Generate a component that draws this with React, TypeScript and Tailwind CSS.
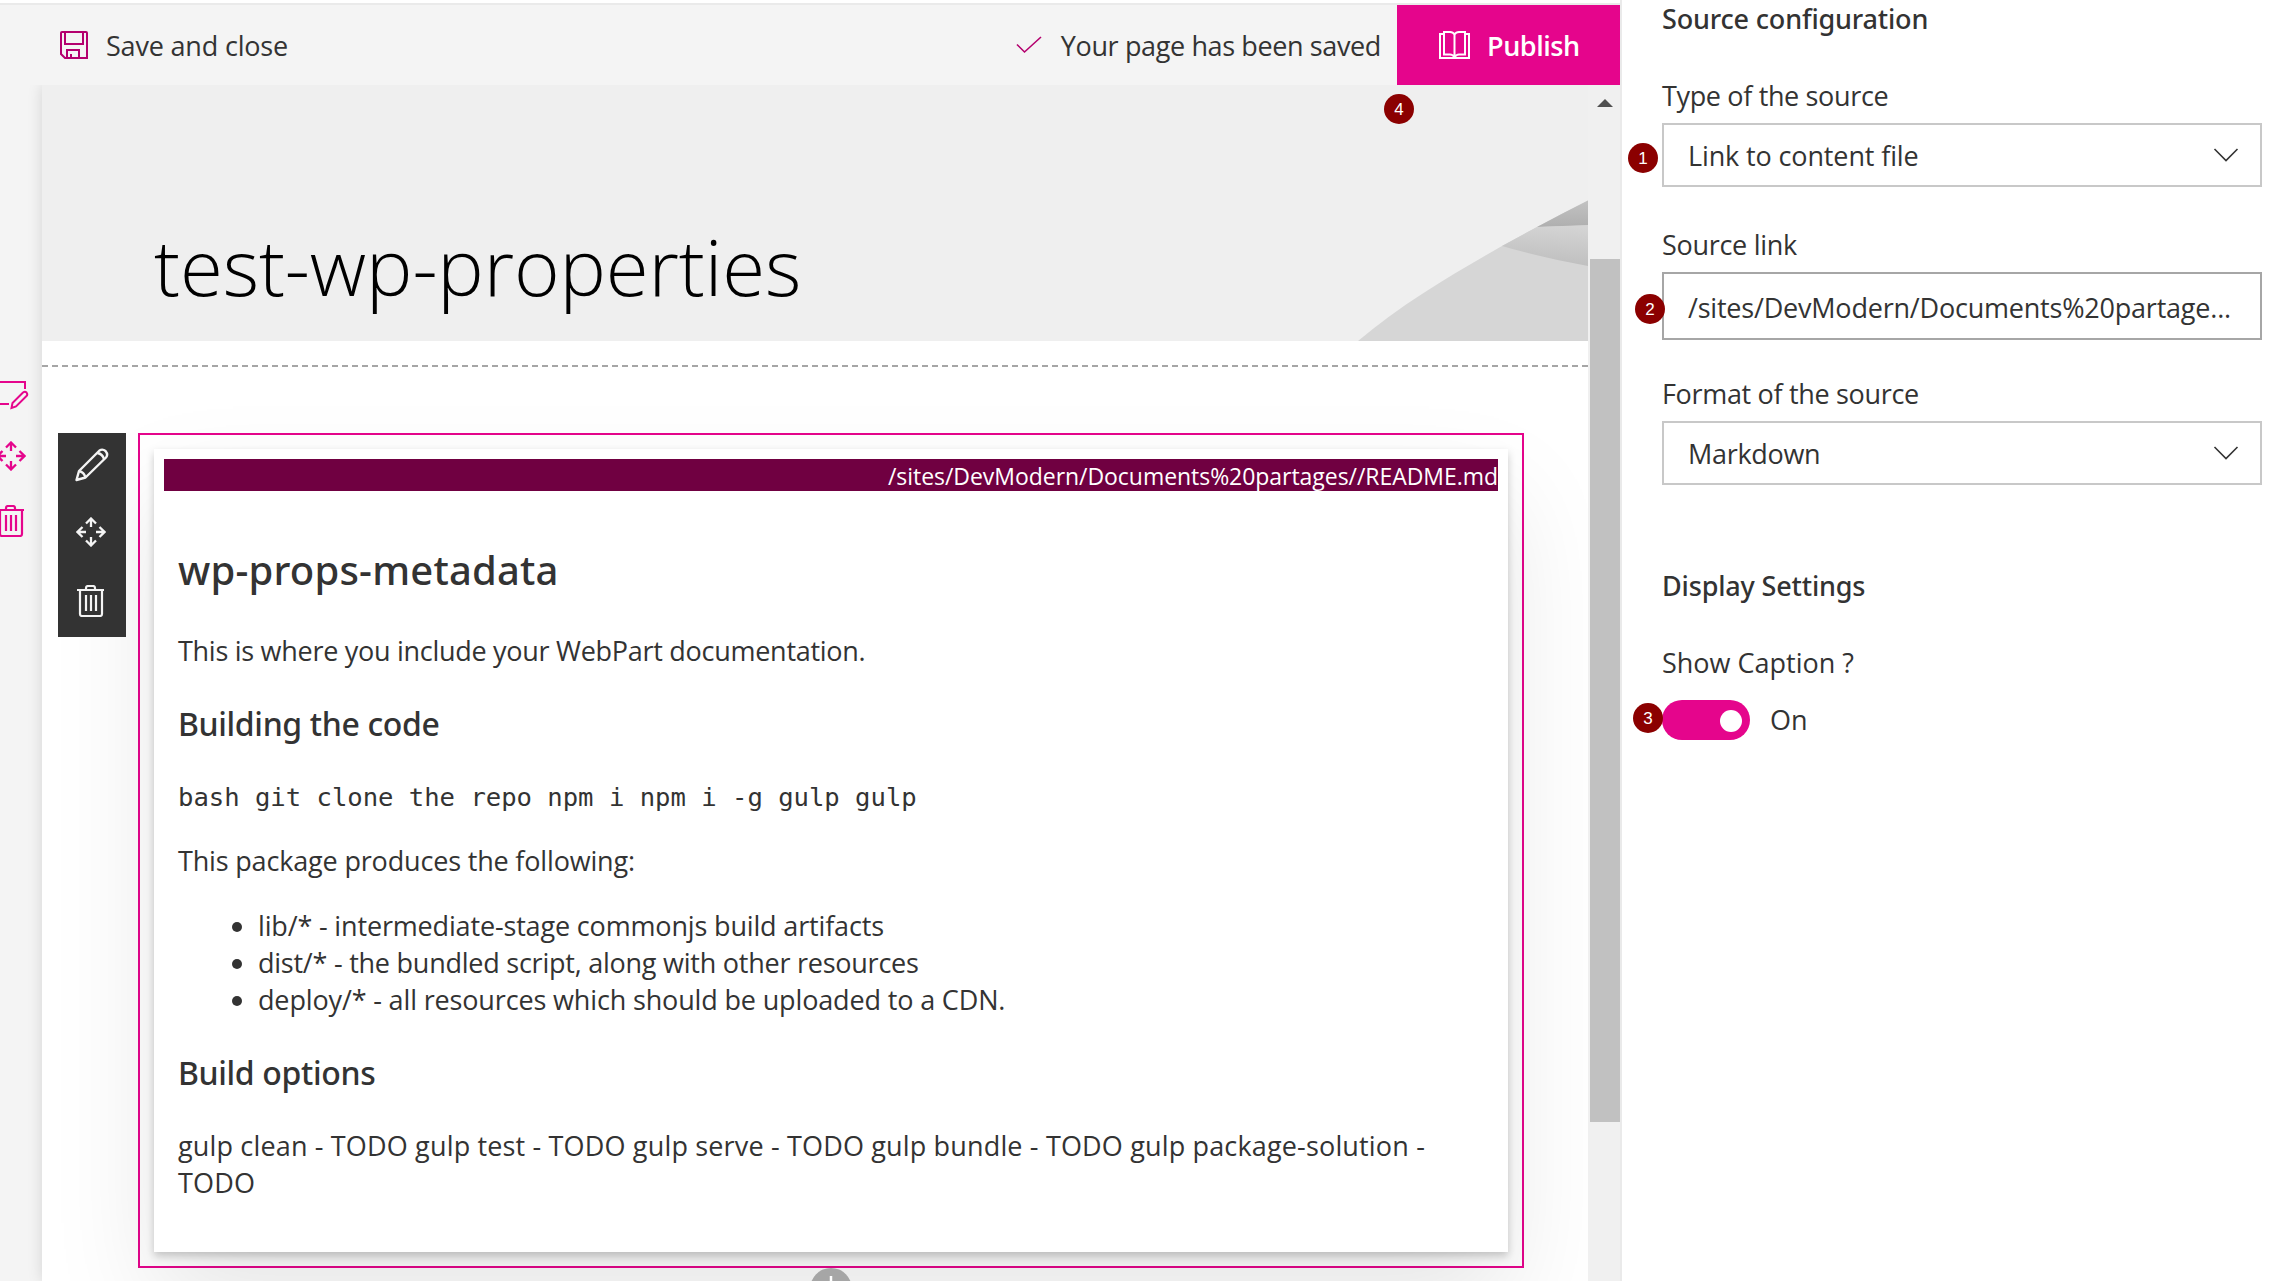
import React from 'react';

const SaveIcon = () => (
  <svg width="28" height="28" viewBox="0 0 28 28" fill="none" stroke="#b4006e" strokeWidth="2">
    <path d="M2 1H26Q27 1 27 2V27H5L1 23V2Q1 1 2 1Z" />
    <path d="M5 1V13H23V1" />
    <path d="M7 27V19H19V27M11 27V23" />
  </svg>
);

const CheckIcon = () => (
  <svg width="26" height="18" viewBox="0 0 26 18" fill="none" stroke="#b4006e" strokeWidth="1.6">
    <path d="M1 8.5L8.5 16L25 1" />
  </svg>
);

const BookIcon = () => (
  <svg width="31" height="28" viewBox="0 0 31 28" fill="none" stroke="#fff" strokeWidth="2">
    <path d="M4 3H1V27H30V3H27" />
    <path d="M15.500 3.500Q14 1 11 1H5V23.500H11Q14 23.500 15.500 26.500Q17 23.500 20 23.500H26V1H20Q17 1 15.500 3.500V26" />
  </svg>
);

const MoveIcon = ({ className }: { className: string }) => (
  <svg className={className} width="30" height="30" viewBox="0 0 30 30" fill="none" stroke="currentColor" strokeWidth="2.3">
    <path d="M15 10V2M10 6.500L15 1.500L20 6.500" />
    <path d="M15 20V28M10 23.500L15 28.500L20 23.500" />
    <path d="M10 15H2M6.500 10L1.500 15L6.500 20" />
    <path d="M20 15H28M23.500 10L28.500 15L23.500 20" />
  </svg>
);

const TrashIcon = ({ className }: { className: string }) => (
  <svg className={className} width="28" height="32" viewBox="0 0 28 32" fill="none" stroke="currentColor" strokeWidth="2.2">
    <path d="M0 5H27M9 5V3Q9 1 11 1H16Q18 1 18 3V5" />
    <path d="M3 5V29Q3 31 5 31H23Q25 31 25 29V5" />
    <path d="M9 10V26M14 10V26M19 10V26" />
  </svg>
);

const PencilIcon = () => (
  <svg width="34" height="34" viewBox="0 0 34 34" fill="none" stroke="#f4f4f4" strokeWidth="2.4" strokeLinejoin="round">
    <path d="M1.500 32L4 23L24.500 2.500Q27.500 0.500 30.500 3Q33.500 6.500 31 9.500L10.500 29.500Z" />
    <path d="M4 23Q9 24 10.500 29.500M22.500 5Q27.500 6 29 11" />
  </svg>
);

const SectionEditIcon = () => (
  <svg width="29" height="30" viewBox="0 0 29 30" fill="none" stroke="#e5058c" strokeWidth="2">
    <path d="M0 2H25V9M0 24H9" />
    <path d="M11.500 28L12.500 23L23 12.500Q25 11 26.500 12.500Q28 14.500 26.500 16L16 26.500Z" />
  </svg>
);

const Chevron = () => (
  <svg width="26" height="14" viewBox="0 0 26 14" fill="none" stroke="#333" strokeWidth="1.6">
    <path d="M1.500 1L13 12.500L24.500 1" />
  </svg>
);

const Badge = ({ n, className }: { n: number; className: string }) => (
  <span
    className={`absolute z-10 flex size-[30px] items-center justify-center rounded-full bg-[#8b0000] font-['Liberation_Sans',sans-serif] text-[17px] leading-none text-white ${className}`}
  >
    {n}
  </span>
);

const Dropdown = ({ value, className, n }: { value: string; className: string; n?: number }) => (
  <div className="relative mt-[9px] flex h-16 w-[600px] items-center justify-between border-2 border-[#c8c8c8] pr-[21px] pl-6">
    <span className={`pt-0.5 ${className}`}>{value}</span>
    <Chevron />
    {n && <Badge n={n} className="top-[18px] -left-[36px]" />}
  </div>
);

export default function App() {
  return (
    <div className="flex h-screen w-full overflow-hidden bg-white font-['Open_Sans','Noto_Sans',sans-serif] text-[27px] leading-9 whitespace-nowrap text-[#333]">
      <div className="relative flex w-[1622px] shrink-0 flex-col border-r-2 border-[#eaeaea]">
        <header className="z-10 mt-[3px] flex h-[82px] shrink-0 items-center border-t-2 border-[#eaeaea] bg-[#f4f4f4] pl-[60px]">
          <SaveIcon />
          <span className="ml-[18px] pt-0.5 tracking-[-0.186px]">Save and close</span>
          <div className="ml-auto flex items-center">
            <CheckIcon />
            <span className="ml-[19px] pt-0.5 tracking-[-0.377px]">Your page has been saved</span>
          </div>
          <button className="ml-[16px] flex h-20 w-[223px] items-center bg-[#e5058c] pl-[42px] font-semibold text-white">
            <BookIcon />
            <span className="ml-[17px] pt-0.5 tracking-[-0.46px]">Publish</span>
          </button>
        </header>

        <div className="flex min-h-0 flex-1">
          <aside className="flex w-[42px] shrink-0 flex-col bg-[#f4f4f4] pt-[295px] text-[#e5058c]">
            <SectionEditIcon />
            <MoveIcon className="mt-[31px] -ml-1" />
            <TrashIcon className="mt-[34px] -ml-[3px]" />
          </aside>

          <main className="relative flex w-[1546px] shrink-0 flex-col shadow-[0_0_14px_rgba(0,0,0,0.13)]">
            <section className="relative h-64 shrink-0 bg-[#efefef] pt-[128px] pl-[112px]">
              <svg className="absolute right-0 bottom-0" width="230" height="141" viewBox="0 0 230 141">
                <defs>
                  <linearGradient id="fold" x1="0" y1="0" x2="0" y2="1">
                    <stop offset="0" stopColor="#c2c2c2" />
                    <stop offset="1" stopColor="#afafaf" />
                  </linearGradient>
                  <linearGradient id="band" x1="0.6" y1="0" x2="0.45" y2="1">
                    <stop offset="0" stopColor="#d4d4d4" />
                    <stop offset="1" stopColor="#bebebe" />
                  </linearGradient>
                </defs>
                <path d="M0 141C45 103 95 74 144 46L179 27Q205 13 230 0.500V141Z" fill="#d6d6d6" />
                <path d="M179 27Q205 13 230 0.500V25.500Z" fill="url(#fold)" />
                <path d="M144 46L179 27L230 25V66Q185 58 144 46Z" fill="url(#band)" />
              </svg>
              <h1 className="text-[78px] leading-[106px] font-light tracking-[-0.122px] text-black">test-wp-properties</h1>
            </section>

            <section className="flex-1 bg-white pt-6">
              <div className="border-t-2 border-dashed border-[#a6a6a6]" />
              <div className="mt-[66px] flex items-start gap-3 pl-4">
                <div className="relative z-10 flex h-[204px] w-[68px] shrink-0 flex-col items-center bg-[#333] pt-[15px] text-[#f4f4f4]">
                  <PencilIcon />
                  <MoveIcon className="mt-[35px] mr-[3px]" />
                  <TrashIcon className="mt-[38px] mr-[3px]" />
                </div>
                <div className="relative h-[835px] w-[1386px] shrink-0 border-2 border-[#e5058c] p-[14px]">
                  <article className="h-[803px] bg-white p-[10px] shadow-[0_4px_8px_rgba(0,0,0,0.2),0_50px_100px_rgba(0,0,0,0.1)]">
                    <div className="h-8 bg-[#700041] text-right text-[23px] leading-[35px] tracking-[-0.046px] text-white">
                      /sites/DevModern/Documents%20partages//README.md
                    </div>
                    <div className="px-[14px] leading-[37px]">
                      <h2 className="mt-[51px] font-['Noto_Sans',sans-serif] text-[40px] leading-[56px] font-medium tracking-[0.2px]">wp-props-metadata</h2>
                      <p className="mt-[34px] tracking-[-0.28px]">This is where you include your WebPart documentation.</p>
                      <h3 className="mt-[33px] font-['Noto_Sans',sans-serif] text-[32px] leading-[44px] font-medium tracking-[-0.35px]">Building the code</h3>
                      <pre className="mt-[33px] font-['DejaVu_Sans_Mono',monospace] text-[25.6px] leading-[37px] tracking-[-0.02px]">
                        bash git clone the repo npm i npm i -g gulp gulp
                      </pre>
                      <p className="mt-[26px] tracking-[-0.171px]">This package produces the following:</p>
                      <ul className="mt-7 list-disc pl-20">
                        <li className="tracking-[-0.16px]">lib/* - intermediate-stage commonjs build artifacts</li>
                        <li className="tracking-[-0.24px]">dist/* - the bundled script, along with other resources</li>
                        <li className="tracking-[-0.15px]">deploy/* - all resources which should be uploaded to a CDN.</li>
                      </ul>
                      <h3 className="mt-[33px] font-['Noto_Sans',sans-serif] text-[32px] leading-[44px] font-medium tracking-[-0.35px]">Build options</h3>
                      <p className="mt-8 tracking-[0.16px] whitespace-normal">
                        gulp clean - TODO gulp test - TODO gulp serve - TODO gulp bundle - TODO gulp package-solution - TODO
                      </p>
                    </div>
                  </article>
                  <div className="absolute top-[833px] left-[670px] flex size-[42px] items-center justify-center rounded-full bg-[#a6a6a6]">
                    <svg width="26" height="26" viewBox="0 0 26 26" stroke="#fff" strokeWidth="2.500">
                      <path d="M13 0V26M0 13H26" />
                    </svg>
                  </div>
                </div>
              </div>
            </section>
          </main>

          <div className="z-10 flex flex-1 flex-col bg-[#f0f0f0] pl-0.5">
            <svg className="mt-[14px] ml-[7px]" width="16" height="8" viewBox="0 0 16 8">
              <path d="M0 8L8 0L16 8Z" fill="#505050" />
            </svg>
            <div className="mt-[152px] h-[863px] bg-[#c1c1c1]" />
          </div>
        </div>
        <Badge n={4} className="top-[94px] left-[1384px]" />
      </div>

      <aside className="flex flex-1 flex-col pt-px pl-10">
        <h4 className="font-['Noto_Sans',sans-serif] font-medium tracking-[-0.17px]">Source configuration</h4>
        <label className="mt-[41px] tracking-[-0.35px]">Type of the source</label>
        <Dropdown value="Link to content file" className="tracking-[-0.13px]" n={1} />
        <label className="mt-[40px] tracking-[-0.294px]">Source link</label>
        <div className="relative mt-[9px] flex h-[68px] w-[600px] items-center border-2 border-[#a6a6a6] pt-[3px] pl-6">
          <span className="tracking-[-0.21px]">/sites/DevModern/Documents%20partage...</span>
          <Badge n={2} className="top-5 -left-[29px]" />
        </div>
        <label className="mt-[36px] tracking-[-0.325px]">Format of the source</label>
        <Dropdown value="Markdown" className="tracking-[-0.313px]" />
        <h4 className="mt-[83px] font-['Noto_Sans',sans-serif] font-medium tracking-[-0.17px]">Display Settings</h4>
        <label className="mt-[41px]">Show Caption ?</label>
        <div className="relative mt-[19px] flex h-10 items-center">
          <div className="flex h-10 w-[88px] items-center justify-end rounded-full bg-[#e5058c] pt-0.5 pr-2">
            <span className="size-[22px] rounded-full bg-white" />
          </div>
          <span className="ml-[20px]">On</span>
          <Badge n={3} className="top-[3px] -left-[29px]" />
        </div>
      </aside>
    </div>
  );
}
